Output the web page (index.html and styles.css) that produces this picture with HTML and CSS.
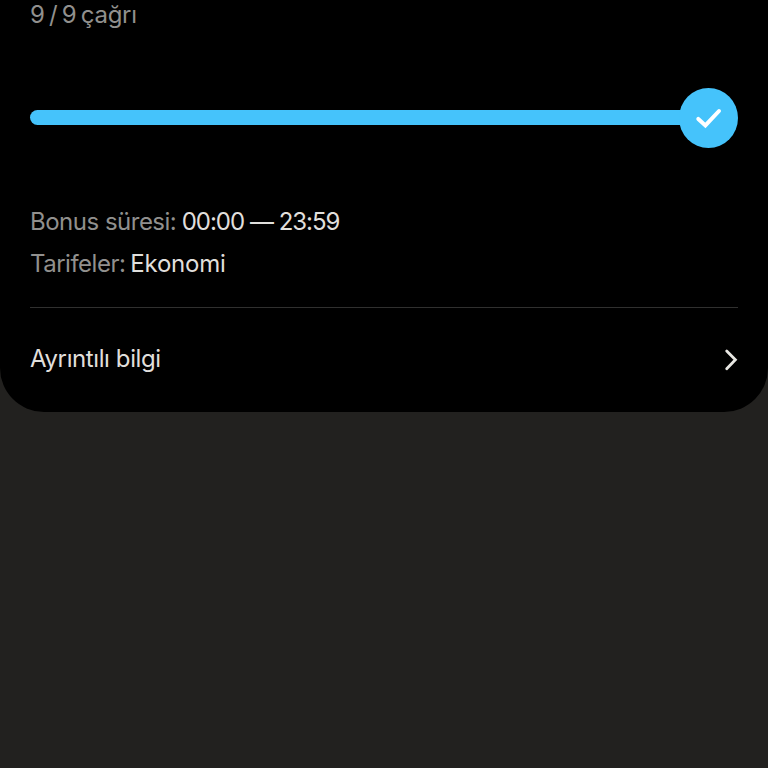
FILE: index.html
```
<!DOCTYPE html>
<html lang="tr">
<head>
<meta charset="utf-8">
<meta name="viewport" content="width=device-width, initial-scale=1">
<title>Bonus</title>
<link rel="stylesheet" href="styles.css">
</head>
<body>
<main class="card">
  <p class="count muted">9 / 9 çağrı</p>
  <div class="progress">
    <div class="track"></div>
    <div class="badge">
      <svg width="59" height="60" viewBox="0 0 59 60" fill="none" stroke="#fff" stroke-width="4" stroke-linecap="round"><path d="M19.3 30.9 26.4 37.4 40 23"/></svg>
    </div>
  </div>
  <dl class="details">
    <div class="row"><dt>Bonus süresi:</dt><dd class="period-value">00:00 — 23:59</dd></div>
    <div class="row"><dt>Tarifeler:</dt><dd class="tariff-value">Ekonomi</dd></div>
  </dl>
  <a class="more">
    <span class="more-label">Ayrıntılı bilgi</span>
    <svg width="16" height="24" viewBox="0 0 16 24" fill="none" stroke="#e8e7e3" stroke-width="2.8" stroke-linecap="round"><path d="M4.7 3.9 13.4 12.8 4.7 21.7"/></svg>
  </a>
</main>
</body>
</html>
```
FILE: styles.css
```
* { box-sizing: border-box; }
body {
  margin: 0;
  min-height: 100vh;
  background: #22211f;
  font-family: Inter, "Liberation Sans", sans-serif;
  font-size: 24px;
  line-height: 42px;
  color: #e0dfdc;
  overflow: hidden;
}
p, dl, dd { margin: 0; }
.card {
  height: 412px;
  padding: 0 30px;
  background: #000;
  border-radius: 0 0 44px 44px;
  overflow: hidden;
}
.muted, dt { color: #91908e; }
.count { height: 88px; margin-top: -6px; letter-spacing: -0.3px; word-spacing: -2px; }
.progress { display: flex; align-items: center; height: 60px; margin-top: 5.5px; }
.track { flex: 1; height: 15px; margin-right: -8px; border-radius: 8px 0 0 8px; background: #45c3fb; }
.badge { width: 59px; height: 60px; border-radius: 50%; background: #45c3fb; }
.badge svg { display: block; }
.details { padding: 53.5px 0 22px; border-bottom: 1px solid #30302f; }
.row { display: flex; gap: 6px; height: 42px; white-space: nowrap; letter-spacing: -0.5px; }
.period-value { margin-left: -0.5px; letter-spacing: -1.05px; word-spacing: 0.2px; }
.tariff-value { margin-left: -1px; letter-spacing: -0.25px; }
.more { display: flex; justify-content: space-between; align-items: center; height: 102px; letter-spacing: -0.4px; }
```
